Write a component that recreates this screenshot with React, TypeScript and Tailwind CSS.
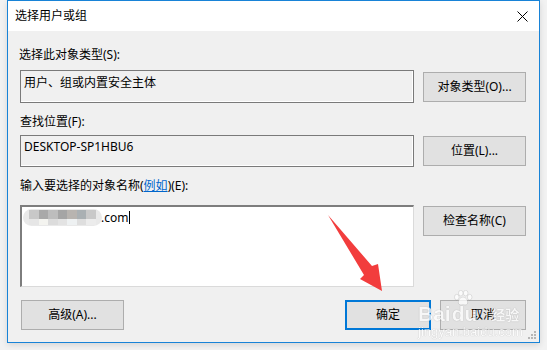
import React from "react";

const FONT = "font-['Noto_Sans','Noto_Sans_CJK_SC',sans-serif]";

function Btn({ children, className = "" }: { children: React.ReactNode; className?: string }) {
  return (
    <div
      className={`flex items-center justify-center bg-[#e1e1e1] border border-[#adadad] text-[12px] text-black leading-none ${className}`}
    >
      {children}
    </div>
  );
}

function Blurred() {
  const top = ["#c8c8c8", "#a9a9a9", "#bdbdbd", "#a5a5a5", "#b8b4b0", "#aab0b3", "#c9c9c9"];
  const bot = ["#e6e6e6", "#f4f4f0", "#dcdcdc", "#e3e3e3", "#eef1f2", "#dedede", "#ececec"];
  return (
    <div className="flex flex-col rounded-full overflow-hidden bg-[#e9e9e9] px-[6px] h-[17px] w-[79px] justify-center blur-[0.6px]">
      <div className="flex h-[9px]">
        {top.map((c, i) => (
          <div key={i} className="flex-1" style={{ background: c }} />
        ))}
      </div>
      <div className="flex h-[6px]">
        {bot.map((c, i) => (
          <div key={i} className="flex-1" style={{ background: c }} />
        ))}
      </div>
    </div>
  );
}

export default function App() {
  return (
    <div className={`relative w-[547px] h-[350px] bg-[#f2f2f2] pl-[7px] overflow-hidden ${FONT}`}>
      <div className="w-[533px] h-[343px] border border-[#1883d7] bg-[#f0f0f0] flex flex-col shadow-[0_2px_6px_rgba(0,0,0,0.12)]">
        {/* Title bar */}
        <div className="h-[30px] bg-white flex items-center justify-between pl-[7px] pr-[10px] shrink-0">
          <span className="text-[12px] text-black">选择用户或组</span>
          <svg width="11" height="11" viewBox="0 0 11 11" className="mr-[1px]">
            <path d="M0.5 0.5 L10.5 10.5 M10.5 0.5 L0.5 10.5" stroke="#000" strokeWidth="1" />
          </svg>
        </div>

        {/* Body */}
        <div className="flex flex-col pl-[12px] pr-[13px] text-[12px] text-black">
          <div className="mt-[16px] h-[16px] leading-[16px] -ml-[1px]">选择此对象类型(S):</div>
          <div className="mt-[7px] flex gap-[9px] items-start">
            <div className="w-[394px] h-[33px] border border-[#7a7a7a] shadow-[inset_-1px_-1px_0_#ffffff] bg-[#f0f0f0] pl-[3px] pt-[4px] leading-[16px]">
              用户、组或内置安全主体
            </div>
            <Btn className="w-[103px] h-[30px] mt-[2px]">对象类型(O)...</Btn>
          </div>

          <div className="mt-[11px] h-[16px] leading-[16px]">查找位置(F):</div>
          <div className="mt-[5px] flex gap-[9px] items-start">
            <div className="w-[394px] h-[32px] border border-[#7a7a7a] shadow-[inset_-1px_-1px_0_#ffffff] bg-[#f0f0f0] pl-[3px] pt-[3px] leading-[16px]">
              DESKTOP-SP1HBU6
            </div>
            <Btn className="w-[103px] h-[30px] mt-[1px]">位置(L)...</Btn>
          </div>

          <div className="mt-[11px] h-[16px] leading-[16px]">
            输入要选择的对象名称(
            <span className="text-[#0066cc] underline decoration-[#0066cc]">例如</span>)(E):
          </div>
          <div className="mt-[11px] flex gap-[9px] items-start">
            <div className="w-[394px] h-[82px] bg-white border-t-2 border-l-2 border-t-[#7d7d7d] border-l-[#7d7d7d] border-r border-b border-r-[#dadada] border-b-[#dadada] flex items-start pt-[2px] pl-[1px]">
              <div className="flex items-center h-[17px]">
                <Blurred />
                <span className="leading-[17px] -ml-[1px]">.com</span>
                <span className="w-px h-[13px] bg-black ml-[1px]" />
              </div>
            </div>
            <Btn className="w-[103px] h-[30px] mt-[1px]">检查名称(C)</Btn>
          </div>

          <div className="mt-[13px] flex items-start">
            <Btn className="w-[103px] h-[30px] ml-[1px]">高级(A)...</Btn>
            <div className="flex-1" />
            <div className="w-[86px] h-[30px] border-2 border-[#0078d7] bg-[#e1e1e1] flex items-center justify-center text-[12px] leading-none">
              确定
            </div>
            <Btn className="w-[86px] h-[30px] ml-[9px]">取消</Btn>
          </div>
        </div>
      </div>

      {/* Resize grip */}
      <svg className="absolute left-[528px] top-[331px]" width="9" height="9" viewBox="0 0 9 9">
        <rect x="6" y="0" width="2" height="2" fill="#b5b5b5" />
        <rect x="3" y="3" width="2" height="2" fill="#b5b5b5" />
        <rect x="6" y="3" width="2" height="2" fill="#b5b5b5" />
        <rect x="0" y="6" width="2" height="2" fill="#b5b5b5" />
        <rect x="3" y="6" width="2" height="2" fill="#b5b5b5" />
        <rect x="6" y="6" width="2" height="2" fill="#b5b5b5" />
      </svg>

      {/* Red arrow annotation */}
      <svg className="absolute left-0 top-0 pointer-events-none" width="547" height="350" viewBox="0 0 547 350">
        <polygon
          points="328,215 372,266 378,264 382,291 360,279 364,275"
          fill="#f23d3d"
        />
      </svg>

      {/* Baidu watermark */}
      <div className="absolute left-[418px] top-[289px] w-[110px] whitespace-nowrap pointer-events-none flex flex-col items-start opacity-75">
        <div className="flex items-end h-[35px] relative whitespace-nowrap">
          <span className="font-['Liberation_Sans',sans-serif] font-bold text-[21px] leading-[21px] text-white [text-shadow:0_0_1px_rgba(0,0,0,0.4)]">
            Bai
          </span>
          <span className="font-['Liberation_Sans',sans-serif] font-bold text-[21px] leading-[21px] text-white ml-[1px] [text-shadow:0_0_1px_rgba(0,0,0,0.4)]">
            du
          </span>
          <span className="font-['Noto_Sans_CJK_SC',sans-serif] font-bold text-[14px] leading-[20px] text-white ml-[14px] [text-shadow:0_0_1px_rgba(0,0,0,0.4)]">
            经验
          </span>
          <svg className="absolute left-[35px] top-[1px]" width="20" height="16" viewBox="0 0 22 18">
            <g fill="#ffffff" stroke="rgba(0,0,0,0.22)" strokeWidth="0.7">
              <ellipse cx="4" cy="8" rx="2.6" ry="3.2" />
              <ellipse cx="8.5" cy="3.5" rx="2.6" ry="3.2" />
              <ellipse cx="14" cy="3.5" rx="2.6" ry="3.2" />
              <ellipse cx="18.5" cy="8" rx="2.6" ry="3.2" />
              <path d="M11 8 C7 8 5 13 6 15.5 C7 17.5 10 16.5 11 16.5 C12 16.5 15 17.5 16 15.5 C17 13 15 8 11 8 Z" />
            </g>
          </svg>
        </div>
        <span className="font-['Liberation_Sans',sans-serif] text-[13px] leading-[14px] text-white mt-[1px] [text-shadow:0_0_1px_rgba(0,0,0,0.4)]">
          jingyan.baidu.com
        </span>
      </div>
    </div>
  );
}
